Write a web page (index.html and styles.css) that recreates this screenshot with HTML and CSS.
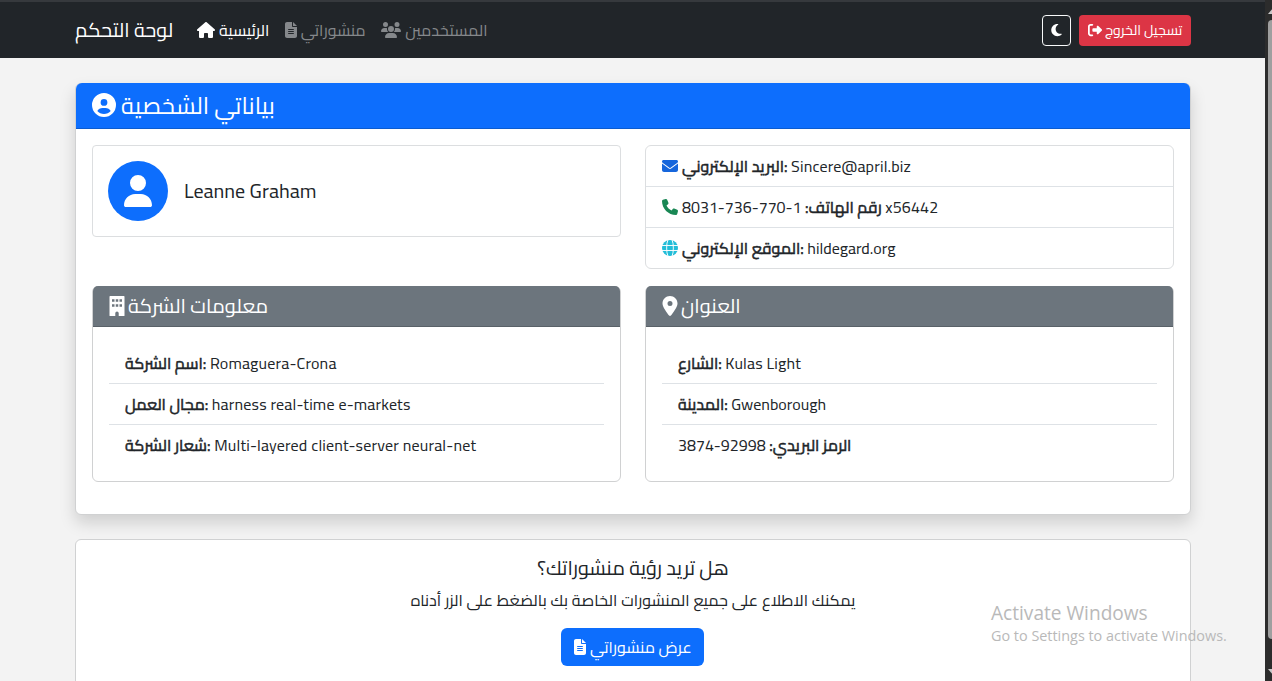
FILE: index.html
```html
<!DOCTYPE html>
<html lang="ar" dir="ltr">
<head>
<meta charset="utf-8">
<title>لوحة التحكم</title>
<link rel="stylesheet" href="styles.css">
</head>
<body>
<svg class="defs" aria-hidden="true">
  <symbol id="house" viewBox="0 0 576 512"><path d="M575.8 255.500c0 18-15 32.100-32 32.100h-32l.7 160.200c0 2.700-.2 5.400-.5 8.100V472c0 22.100-17.900 40-40 40H392c-22.100 0-40-17.900-40-40V384c0-17.700-14.300-32-32-32H256c-17.700 0-32 14.300-32 32v88c0 22.100-17.900 40-40 40H104c-22.100 0-40-17.900-40-40V287.600H32c-18 0-32-14-32-32.100c0-9 3-17 10-24L266.400 8c7-7 15-8 22-8s15 2 21 7L564.800 231.500c8 7 12 15 11 24z"/></symbol>
  <symbol id="file" viewBox="0 0 384 512"><path fill-rule="evenodd" d="M64 0C28.700 0 0 28.700 0 64V448c0 35.300 28.700 64 64 64H320c35.300 0 64-28.700 64-64V160H256c-17.700 0-32-14.300-32-32V0H64zM256 0V128H384L256 0zM112 224H272c21 0 21 32 0 32H112c-21 0-21-32 0-32zM112 288H272c21 0 21 32 0 32H112c-21 0-21-32 0-32zM112 352H272c21 0 21 32 0 32H112c-21 0-21-32 0-32z"/></symbol>
  <symbol id="users" viewBox="0 0 640 512"><path d="M144 0a80 80 0 1 1 0 160A80 80 0 1 1 144 0zM512 0a80 80 0 1 1 0 160A80 80 0 1 1 512 0zM0 298.700C0 239.800 47.800 192 106.700 192h42.700c15.900 0 31 3.500 44.600 9.700c-1.300 7.200-1.900 14.700-1.900 22.300c0 38.200 16.800 72.500 43.300 96H21.300C9.600 320 0 310.400 0 298.700zM405.300 320h-.7c26.600-23.500 43.300-57.800 43.300-96c0-7.600-.7-15-1.900-22.300c13.600-6.300 28.700-9.700 44.600-9.700h42.700C592.200 192 640 239.800 640 298.700c0 11.800-9.600 21.300-21.300 21.300H405.300zM224 224a96 96 0 1 1 192 0 96 96 0 1 1-192 0zM128 485.300C128 411.700 187.700 352 261.300 352H378.700C452.300 352 512 411.700 512 485.300c0 14.700-11.900 26.700-26.700 26.700H154.700c-14.700 0-26.700-11.900-26.700-26.700z"/></symbol>
  <symbol id="moon" viewBox="0 0 384 512"><path d="M223.500 32C100 32 0 132.300 0 256S100 480 223.500 480c60.600 0 115.500-24.200 155.800-63.400c5-4.900 6.300-12.500 3.100-18.700s-10.100-9.700-17-8.500c-9.800 1.700-19.800 2.600-30.100 2.600c-96.900 0-175.500-78.800-175.500-176c0-65.800 36-123.100 89.300-153.300c6.100-3.500 9.200-10.500 7.700-17.300s-7.300-11.900-14.300-12.500c-6.300-.5-12.600-.8-19-.8z"/></symbol>
  <symbol id="exit" viewBox="0 0 512 512"><path d="M377.900 105.900L500.700 228.700c7.200 7.200 11.300 17.100 11.300 27.300s-4.100 20.100-11.300 27.300L377.900 406.100c-6.400 6.400-15 9.900-24 9.900c-18.700 0-33.900-15.200-33.900-33.900l0-62.100-128 0c-17.700 0-32-14.300-32-32l0-64c0-17.700 14.300-32 32-32l128 0 0-62.100c0-18.700 15.200-33.900 33.900-33.900c9 0 17.600 3.600 24 9.900zM160 96L96 96c-17.700 0-32 14.300-32 32l0 256c0 17.700 14.300 32 32 32l64 0c17.700 0 32 14.300 32 32s-14.300 32-32 32l-64 0c-53 0-96-43-96-96L0 128C0 75 43 32 96 32l64 0c17.700 0 32 14.300 32 32s-14.300 32-32 32z"/></symbol>
  <symbol id="profile" viewBox="0 0 512 512"><path fill-rule="evenodd" d="M399 384.200C376.900 345.800 335.400 320 288 320H224c-47.400 0-88.900 25.800-111 64.200c35.200 39.200 86.200 63.800 143 63.800s107.800-24.700 143-63.800zM0 256a256 256 0 1 1 512 0A256 256 0 1 1 0 256zm256 16a72 72 0 1 0 0-144 72 72 0 1 0 0 144z"/></symbol>
  <symbol id="user" viewBox="0 0 448 512"><path d="M224 256A128 128 0 1 0 224 0a128 128 0 1 0 0 256zm-45.700 48C79.800 304 0 383.800 0 482.300C0 498.700 13.300 512 29.700 512H418.300c16.400 0 29.700-13.300 29.700-29.700C448 383.800 368.200 304 269.700 304H178.300z"/></symbol>
  <symbol id="mail" viewBox="0 0 512 512"><path d="M48 64C21.500 64 0 85.500 0 112c0 15.100 7.100 29.300 19.200 38.400L236.800 313.600c11.400 8.500 27 8.500 38.400 0L492.800 150.400c12.100-9.100 19.200-23.300 19.200-38.400c0-26.500-21.500-48-48-48H48zM0 176V384c0 35.300 28.700 64 64 64H448c35.300 0 64-28.700 64-64V176L294.400 339.200c-22.800 17.100-54 17.100-76.800 0L0 176z"/></symbol>
  <symbol id="phone" viewBox="0 0 512 512"><path d="M164.900 24.600c-7.700-18.600-28-28.500-47.400-23.200l-88 24C12.100 30.200 0 46 0 64C0 311.400 200.600 512 448 512c18 0 33.800-12.100 38.600-29.500l24-88c5.300-19.400-4.600-39.700-23.200-47.400l-96-40c-16.300-6.800-35.200-2.100-46.300 11.600L304.700 368C234.300 334.700 177.300 277.700 144 207.300L193.300 167c13.700-11.200 18.400-30 11.600-46.300l-40-96z"/></symbol>
  <symbol id="globe" viewBox="0 0 512 512"><circle cx="256" cy="256" r="256"/><g fill="none" stroke="#fff" stroke-width="30"><path d="M0 176H512M0 336H512"/><path d="M190-5C135 110 135 400 190 517M322-5C377 110 377 400 322 517"/></g></symbol>
  <symbol id="building" viewBox="0 0 384 512"><path fill-rule="evenodd" d="M16 0H368a16 16 0 0 1 16 16V496a16 16 0 0 1-16 16H236V440a44 44 0 0 0-88 0V512H16a16 16 0 0 1-16-16V16A16 16 0 0 1 16 0zM64 80V144H128V80zM160 80V144H224V80zM256 80V144H320V80zM64 208V272H128V208zM160 208V272H224V208zM256 208V272H320V208z"/></symbol>
  <symbol id="pin" viewBox="0 0 384 512"><path fill-rule="evenodd" d="M215.700 499.200C267 435 384 279.400 384 192C384 86 298 0 192 0S0 86 0 192c0 87.400 117 243 168.300 307.200c12.300 15.300 35.100 15.300 47.400 0zM192 128a64 64 0 1 1 0 128 64 64 0 1 1 0-128z"/></symbol>
</svg>

<div class="page">
  <nav class="navbar">
    <div class="container bar">
      <span class="brand">لوحة التحكم</span>
      <a class="link active"><svg class="i-house"><use href="#house"/></svg><span>الرئيسية</span></a>
      <a class="link"><svg class="i-file"><use href="#file"/></svg><span>منشوراتي</span></a>
      <a class="link"><svg class="i-users"><use href="#users"/></svg><span>المستخدمين</span></a>
      <span class="spacer"></span>
      <button class="theme"><svg class="i-moon"><use href="#moon"/></svg></button>
      <button class="logout"><svg class="i-exit"><use href="#exit"/></svg><span>تسجيل الخروج</span></button>
    </div>
  </nav>

  <main class="container">
    <section class="card profile">
      <h4 class="card-head"><svg class="i-profile"><use href="#profile"/></svg><span>بياناتي الشخصية</span></h4>
      <div class="grid">
        <div class="box person">
          <span class="avatar"><svg class="i-user"><use href="#user"/></svg></span>
          <span class="name">Leanne Graham</span>
        </div>
        <ul class="box contact">
          <li><svg class="i-contact blue"><use href="#mail"/></svg><span><strong>البريد الإلكتروني:</strong> <span class="value">Sincere@april.biz</span></span></li>
          <li><svg class="i-contact green"><use href="#phone"/></svg><span><strong>رقم الهاتف:</strong> <span class="value">1-770-736-8031 x56442</span></span></li>
          <li><svg class="i-contact cyan"><use href="#globe"/></svg><span><strong>الموقع الإلكتروني:</strong> hildegard.org</span></li>
        </ul>
        <div class="box info">
          <h5 class="info-head"><svg class="i-head"><use href="#building"/></svg><span>معلومات الشركة</span></h5>
          <ul>
            <li><strong>اسم الشركة:</strong> <span class="value">Romaguera-Crona</span></li>
            <li><strong>مجال العمل:</strong> <span class="value">harness real-time e-markets</span></li>
            <li><strong>شعار الشركة:</strong> <span class="value">Multi-layered client-server neural-net</span></li>
          </ul>
        </div>
        <div class="box info">
          <h5 class="info-head"><svg class="i-head"><use href="#pin"/></svg><span>العنوان</span></h5>
          <ul>
            <li><strong>الشارع:</strong> <span class="value">Kulas Light</span></li>
            <li><strong>المدينة:</strong> Gwenborough</li>
            <li><strong>الرمز البريدي:</strong> 92998-3874</li>
          </ul>
        </div>
      </div>
    </section>

    <section class="card posts">
      <h5 dir="rtl">هل تريد رؤية منشوراتك؟</h5>
      <p>يمكنك الاطلاع على جميع المنشورات الخاصة بك بالضغط على الزر أدناه</p>
      <button class="show"><svg class="i-show"><use href="#file"/></svg><span>عرض منشوراتي</span></button>
    </section>
  </main>
</div>
<div class="scrollbar"><span class="up"></span><span class="thumb"></span><span class="down"></span></div>
<div class="watermark"><div class="w1">Activate Windows</div><div class="w2">Go to Settings to activate Windows.</div></div>
</body>
</html>
```
FILE: styles.css
```css
* { box-sizing: border-box; }
body { margin: 0; height: 681px; overflow: hidden; display: flex; background: #f3f3f3; color: #212529;
  font: 16px/24px Cairo, Roboto, "DejaVu Sans Condensed", "DejaVu Sans", sans-serif; }
h4, h5, p, ul { margin: 0; padding: 0; font-weight: 400; list-style: none; }
button { font: inherit; border: 0; padding: 0; color: #fff; }
svg { fill: currentColor; flex: none; display: block; }
span, li { white-space: nowrap; }
.defs { position: absolute; width: 0; height: 0; }
.page { width: 1265px; flex: none; height: 681px; overflow: hidden; }
.container { width: 1116px; margin-left: 75px; }
strong { font-weight: 400; -webkit-text-stroke: .5px currentColor; }
.value { letter-spacing: .18px; }

.navbar { height: 58px; background: #212529; border-top: 2px solid #36393d; }
.bar { height: 56px; display: flex; align-items: center; color: #fff; }
.brand { font-size: 19.8px; width: 122px; }
.link { display: flex; align-items: center; gap: 4px; margin-right: 15.5px; color: #85888b; }
.link.active { color: #fff; }
.i-house { width: 18px; height: 16px; }
.i-file { width: 12px; height: 16px; }
.i-users { width: 20px; height: 16px; }
.spacer { flex: 1; }
.theme { width: 29px; height: 31px; border: 1px solid #f8f9fa; border-radius: 4px; background: none; display: grid; place-items: center; margin-right: 8px; }
.i-moon { width: 11px; height: 14px; }
.logout { width: 112px; height: 31px; background: #dc3545; border-radius: 4px; display: flex; align-items: center; gap: 3px; padding-left: 9px; font-size: 14px; }
.i-exit { width: 14px; height: 14px; }

.card { background: #fff; border: 1px solid #d0d1d2; border-radius: 6px; }
.profile { margin-top: 25px; height: 432px; box-shadow: 0 8px 16px rgba(0,0,0,.15); }
.card-head { height: 46px; margin-top: -1px; background: #0d6efd; border-bottom: 1px solid #0b5ccf; border-radius: 6px 6px 0 0; color: #fff;
  font-size: 23.6px; display: flex; align-items: center; gap: 5px; padding: 0 16px 2px; }
.i-profile { width: 24px; height: 24px; }
.grid { display: grid; grid-template-columns: 529px 529px; column-gap: 24px; row-gap: 17px; padding: 16px; align-items: start; }
.box { border: 1px solid #dcdee0; border-radius: 6px; background: #fff; }
.person { height: 92px; display: flex; align-items: center; padding-left: 15px; gap: 16px; border-radius: 4px; }
.avatar { width: 60px; height: 60px; border-radius: 50%; background: #0d6efd; color: #fff; display: grid; place-items: center; }
.i-user { width: 28px; height: 32px; }
.name { font-size: 20px; }
.contact { height: 124px; }
.contact li { height: 41px; border-bottom: 1px solid #dee2e6; display: flex; align-items: center; gap: 4px; padding-left: 16px; }
.contact li:last-child { height: 40px; border: 0; }
.contact strong { letter-spacing: 0; }
.i-contact { width: 16px; height: 16px; }
.blue { color: #1666dc; }
.green { color: #198754; }
.cyan { color: #22bdd8; }
.info { height: 196px; border-color: #d0d1d2; }
.info-head { height: 41px; margin-top: -1px; margin-bottom: 1px; background: #6c757d; border-bottom: 1px solid #596168; border-radius: 5px 5px 0 0; color: #fff; font-size: 20px;
  display: flex; align-items: center; gap: 3.500px; padding: 0 15.500px; }
.i-head { width: 16px; height: 20px; }
.info ul { padding: 15px 16px 0; }
.info li { height: 41px; border-bottom: 1px solid #dee2e6; padding: 8px 16px 0; }
.info li:last-child { border: 0; }

.posts { height: 160px; margin-top: 24px; text-align: center; display: flex; flex-direction: column; align-items: center; }
.posts h5 { font-size: 19.8px; margin-top: 16px; }
.posts p { margin-top: 8px; word-spacing: .35px; }
.show { width: 143px; height: 38px; margin: 16px 1px 0 0; border-radius: 6px; background: #0d6efd; display: flex; align-items: center; gap: 4px; padding-left: 13px; }
.i-show { width: 12px; height: 16px; }

.scrollbar { width: 7px; flex: none; height: 681px; background: #2c2c2c; padding-left: 3px; display: flex; flex-direction: column; overflow: hidden; }
.up { height: 6px; margin-top: 8px; flex: none; width: 10px; background: #c8c8c8; clip-path: polygon(0 100%, 50% 0, 100% 100%); }
.thumb { margin-top: 6px; height: 619px; flex: none; width: 8px; background: #9f9f9f; border-radius: 4px 0 0 4px; }
.down { height: 6px; margin-top: 30px; flex: none; width: 10px; background: #c8c8c8; clip-path: polygon(0 0, 100% 0, 50% 100%); }
.watermark { position: absolute; left: 991px; top: 600px; color: #b9b9b9; font-family: "Open Sans", sans-serif; white-space: nowrap; }
.w1 { font-size: 19.1px; line-height: 26px; }
.w2 { font-size: 14.4px; line-height: 20px; }
```
